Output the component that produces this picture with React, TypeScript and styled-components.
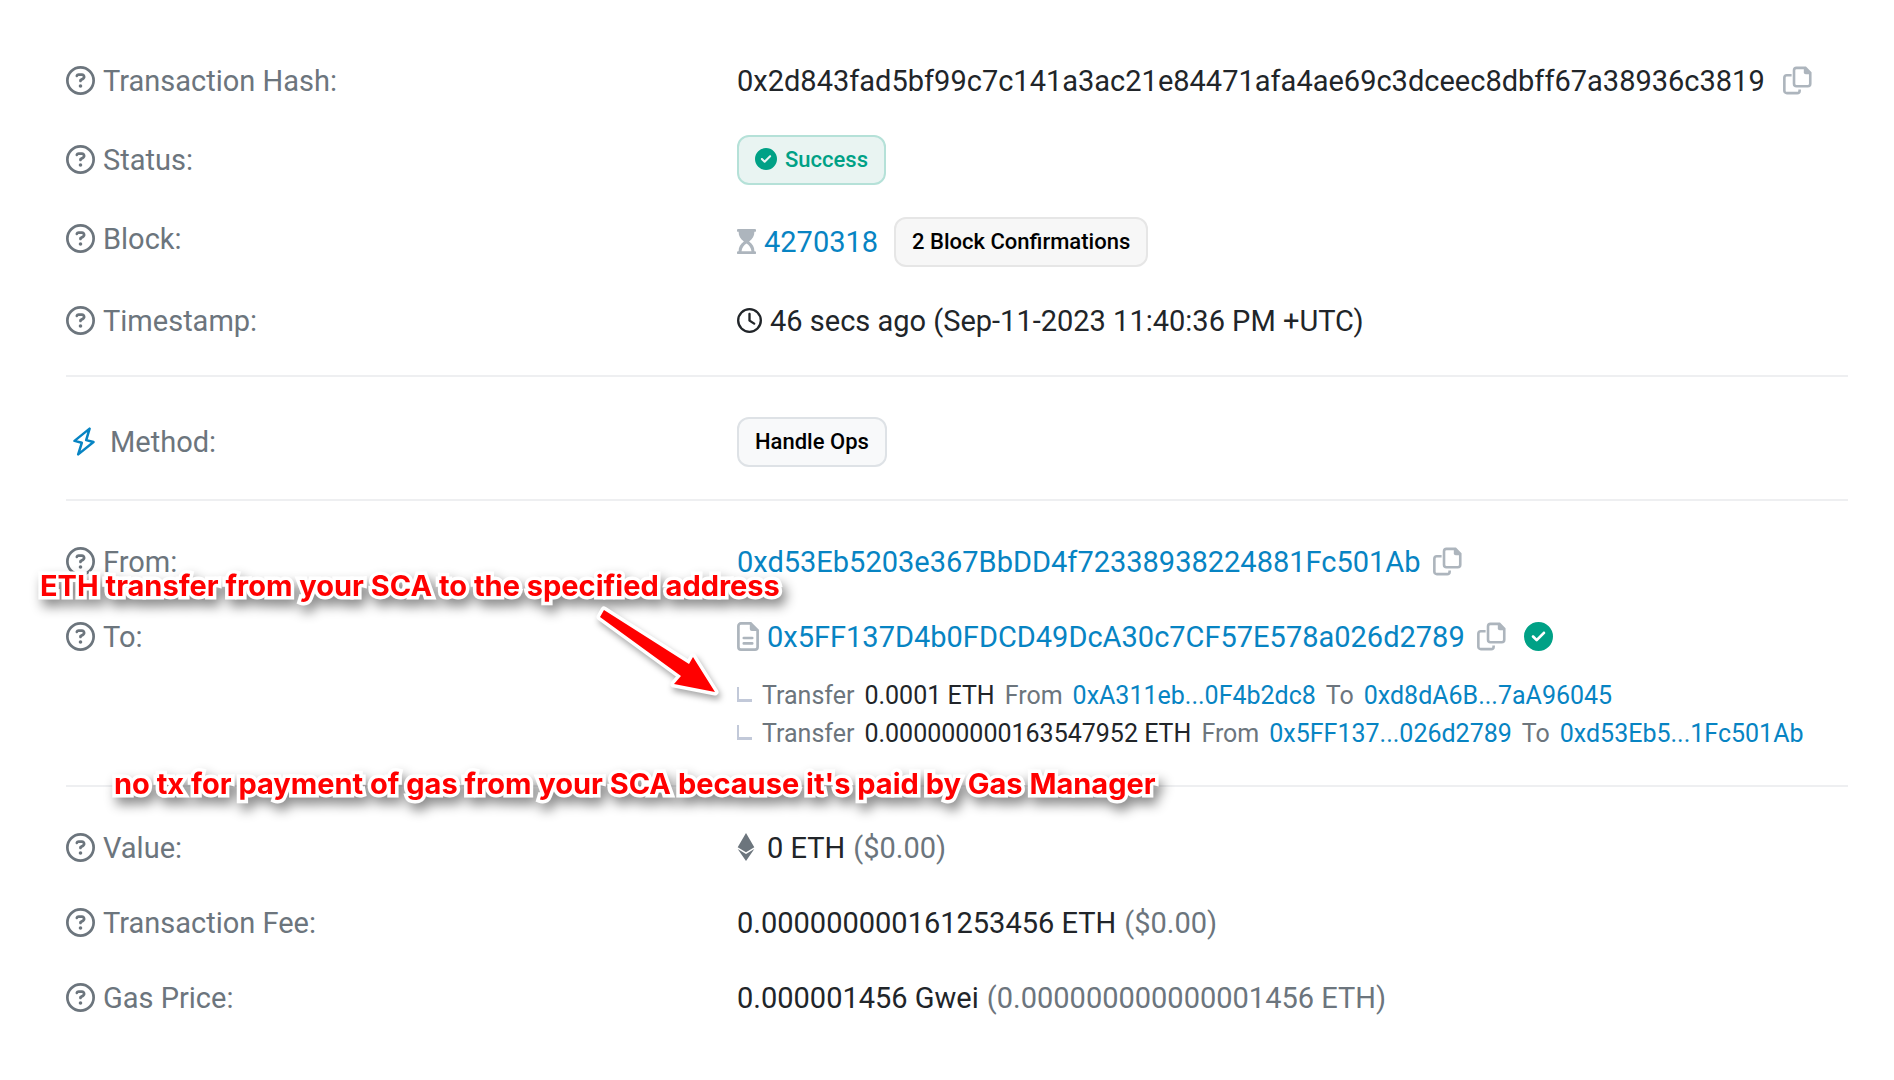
import React from 'react';
import styled, { createGlobalStyle, css } from 'styled-components';
import { FaCircleCheck, FaRegCircleQuestion, FaRegClock } from 'react-icons/fa6';

const GlobalStyle = createGlobalStyle`
  *, *::before, *::after { box-sizing: border-box; }
  body {
    margin: 0;
    background: #fff;
    color: #212529;
    font-family: Roboto, "Liberation Sans", sans-serif;
    font-size: 29px;
    line-height: 44px;
  }
`;

const Page = styled.main`
  position: relative;
  min-height: 100vh;
  padding: 59px 46px 40px 66px;
`;

const Group = styled.dl<{ $gap?: number; $top?: number }>`
  margin: 0;
  padding-bottom: 32px;
  display: flex;
  flex-direction: column;
  gap: ${p => p.$gap ?? 31}px;

  &:not(:first-child) {
    padding-top: ${p => p.$top ?? 39}px;
    border-top: 2px solid #eeeff1;
  }
`;

const Row = styled.div<{ $center?: boolean }>`
  display: grid;
  grid-template-columns: 671px minmax(0, 1fr);
  align-items: ${p => (p.$center ? 'center' : 'start')};
`;

const Label = styled.dt<{ $inset?: boolean }>`
  display: flex;
  align-items: center;
  gap: 8px;
  color: #6c757d;
  white-space: nowrap;
  ${p => p.$inset && css`
    padding-left: 7px;
    gap: 15px;
  `}
`;

const Value = styled.dd`
  margin: 0;
  white-space: nowrap;
`;

const Line = styled.div<{ $gap?: number }>`
  display: flex;
  align-items: center;
  gap: ${p => p.$gap ?? 8}px;
`;

const Icon = styled.span<{ $color?: string; $size?: number }>`
  display: inline-flex;
  flex: none;
  margin-bottom: 2px;
  color: ${p => p.$color ?? 'inherit'};
  font-size: ${p => p.$size ?? 29}px;

  svg { display: block; }
`;

const Link = styled.a`
  color: #0784c3;
  text-decoration: none;
`;

const Muted = styled.span`
  color: #6c757d;
`;

const Badge = styled.span<{ $tone?: 'success' | 'neutral' }>`
  display: inline-flex;
  align-items: center;
  gap: 8px;
  height: 50px;
  padding: 0 16px;
  border: 2px solid #dee2e6;
  border-radius: 12px;
  background: #f8f9fa;
  color: #000;
  font-size: 22px;
  font-weight: 500;
  ${p => p.$tone === 'neutral' && css`
    border-color: #e6e6e6;
    background: #f7f7f7;
  `}
  ${p => p.$tone === 'success' && css`
    border-color: #b5e1d8;
    background: #e9f4f2;
    color: #00a186;
  `}
`;

const CopyButton = styled.button`
  display: inline-flex;
  flex: none;
  margin: 0 0 2px;
  padding: 0;
  border: 0;
  background: none;
  color: #adb5bd;
  cursor: pointer;
`;

const Transfers = styled.ul`
  margin: 18px 0 0;
  padding: 0;
  list-style: none;
`;

const Transfer = styled.li`
  display: flex;
  align-items: center;
  gap: 10px;
  font-size: 25px;
  line-height: 38px;

  &::before {
    content: "";
    width: 15px;
    height: 15px;
    margin-bottom: 4px;
    border: solid #c2c9d9;
    border-width: 0 0 3px 2px;
  }
`;

const Note = styled.p<{ $x: number; $y: number }>`
  position: absolute;
  left: ${p => p.$x}px;
  top: ${p => p.$y}px;
  margin: 0;
  color: #f00;
  font-family: Inter, "Liberation Sans", sans-serif;
  font-size: 29px;
  font-weight: 700;
  line-height: 40px;
  white-space: nowrap;
  -webkit-text-stroke: 7px #fff;
  paint-order: stroke fill;
  filter: drop-shadow(4px 7px 6px rgba(0, 0, 0, 0.45));
`;

const Arrow = styled.svg`
  position: absolute;
  left: 590px;
  top: 600px;
  filter: drop-shadow(2px 4px 3px rgba(0, 0, 0, 0.35));
`;

const CopyIcon = () => (
  <svg width="29" height="29" viewBox="0 0 30 29" fill="none" stroke="currentColor" strokeWidth="2.7" aria-hidden="true">
    <path d="M14 1.4h9.2l5 5v11.4a2.6 2.6 0 0 1-2.6 2.6H14a2.6 2.6 0 0 1-2.6-2.6V4A2.6 2.6 0 0 1 14 1.4z" />
    <path d="M21.5 .8V6a2 2 0 0 0 2 2H29L23 .8z" fill="currentColor" stroke="none" />
    <path d="M8.9 9H4a2.6 2.6 0 0 0-2.6 2.6V25A2.6 2.6 0 0 0 4 27.6h10.6a2.6 2.6 0 0 0 2.6-2.6v-1.3" />
  </svg>
);

const DocIcon = () => (
  <svg width="22" height="29" viewBox="0 0 22 29" fill="none" stroke="currentColor" strokeWidth="2.7" aria-hidden="true">
    <path d="M4 1.4h9.6l7 7V25a2.6 2.6 0 0 1-2.6 2.6H4A2.6 2.6 0 0 1 1.4 25V4A2.6 2.6 0 0 1 4 1.4z" />
    <path d="M12.8.8V7a2 2 0 0 0 2 2H21.4L14 .6z" fill="currentColor" stroke="none" />
    <path d="M6.8 16h8.4M6.8 21.4h8.4" strokeLinecap="round" />
  </svg>
);

const HourglassIcon = () => (
  <svg width="19" height="25" viewBox="0 0 19 25" fill="currentColor" aria-hidden="true">
    <path
      fillRule="evenodd"
      d="M1.2 0h16.6a1.3 1.3 0 0 1 0 2.8h-.4c0 4.3-1.8 7.3-5.3 9.7 3.5 2.4 5.3 5.4 5.3 9.7h.4a1.3 1.3 0 0 1 0 2.8H1.2a1.3 1.3 0 0 1 0-2.8h.4c0-4.3 1.8-7.3 5.3-9.7C3.4 10.1 1.6 7.1 1.6 2.8h-.4A1.3 1.3 0 0 1 1.2 0zM9.5 14.6c-2.5 1.5-4.3 4-5 7.6h10c-.7-3.6-2.5-6.1-5-7.6z"
    />
  </svg>
);

const BoltIcon = () => (
  <svg width="22" height="29" viewBox="0 0 22 29" fill="none" stroke="currentColor" strokeWidth="2.5" strokeLinejoin="round" aria-hidden="true">
    <path d="M16.6 1.6 1.5 13.9l7.3 1.9-3.6 11.6L20.5 15l-7.3-1.9z" />
  </svg>
);

const EtherIcon = () => (
  <svg width="18" height="28" viewBox="0 0 320 512" fill="currentColor" aria-hidden="true">
    <path d="M311.9 260.8 160 353.6 8 260.8 160 0zM160 383.4 8 290.6 160 512l152-221.4z" />
  </svg>
);

const Copy = ({ what }: { what: string }) => (
  <CopyButton type="button" aria-label={`Copy ${what}`}>
    <CopyIcon />
  </CopyButton>
);

const HelpLabel = ({ children }: { children: React.ReactNode }) => (
  <Label>
    <Icon><FaRegCircleQuestion /></Icon>
    {children}
  </Label>
);

const transfers = [
  { amount: '0.0001 ETH', from: '0xA311eb...0F4b2dc8', to: '0xd8dA6B...7aA96045' },
  { amount: '0.000000000163547952 ETH', from: '0x5FF137...026d2789', to: '0xd53Eb5...1Fc501Ab' },
];

export default function App() {
  return (
    <>
      <GlobalStyle />
      <Page>
        <Group $gap={32}>
          <Row>
            <HelpLabel>Transaction Hash:</HelpLabel>
            <Value>
              <Line $gap={18}>
                0x2d843fad5bf99c7c141a3ac21e84471afa4ae69c3dceec8dbff67a38936c3819
                <Copy what="transaction hash" />
              </Line>
            </Value>
          </Row>
          <Row $center>
            <HelpLabel>Status:</HelpLabel>
            <Value>
              <Line>
                <Badge $tone="success">
                  <Icon $size={22}><FaCircleCheck /></Icon>
                  Success
                </Badge>
              </Line>
            </Value>
          </Row>
          <Row>
            <HelpLabel>Block:</HelpLabel>
            <Value>
              <Line $gap={16}>
                <Line>
                  <Icon $color="#adb5bd"><HourglassIcon /></Icon>
                  <Link href="#block">4270318</Link>
                </Line>
                <Badge $tone="neutral">2 Block Confirmations</Badge>
              </Line>
            </Value>
          </Row>
          <Row>
            <HelpLabel>Timestamp:</HelpLabel>
            <Value>
              <Line>
                <Icon $size={25}><FaRegClock /></Icon>
                46 secs ago (Sep-11-2023 11:40:36 PM +UTC)
              </Line>
            </Value>
          </Row>
        </Group>

        <Group $top={40}>
          <Row $center>
            <Label $inset>
              <Icon $color="#0784c3"><BoltIcon /></Icon>
              Method:
            </Label>
            <Value>
              <Line>
                <Badge>Handle Ops</Badge>
              </Line>
            </Value>
          </Row>
        </Group>

        <Group>
          <Row>
            <HelpLabel>From:</HelpLabel>
            <Value>
              <Line $gap={12}>
                <Link href="#from">0xd53Eb5203e367BbDD4f72338938224881Fc501Ab</Link>
                <Copy what="sender address" />
              </Line>
            </Value>
          </Row>
          <Row>
            <HelpLabel>To:</HelpLabel>
            <Value>
              <Line $gap={18}>
                <Line $gap={12}>
                  <Line>
                    <Icon $color="#adb5bd"><DocIcon /></Icon>
                    <Link href="#to">0x5FF137D4b0FDCD49DcA30c7CF57E578a026d2789</Link>
                  </Line>
                  <Copy what="recipient address" />
                </Line>
                <Icon $color="#00a186"><FaCircleCheck /></Icon>
              </Line>
              <Transfers>
                {transfers.map(t => (
                  <Transfer key={t.amount}>
                    <Muted>Transfer</Muted>
                    <span>{t.amount}</span>
                    <Muted>From</Muted>
                    <Link href="#transfer-from">{t.from}</Link>
                    <Muted>To</Muted>
                    <Link href="#transfer-to">{t.to}</Link>
                  </Transfer>
                ))}
              </Transfers>
            </Value>
          </Row>
        </Group>

        <Group>
          <Row>
            <HelpLabel>Value:</HelpLabel>
            <Value>
              <Line $gap={12}>
                <Icon $color="#6c757d"><EtherIcon /></Icon>
                <Line>0 ETH <Muted>($0.00)</Muted></Line>
              </Line>
            </Value>
          </Row>
          <Row>
            <HelpLabel>Transaction Fee:</HelpLabel>
            <Value>
              <Line>0.000000000161253456 ETH <Muted>($0.00)</Muted></Line>
            </Value>
          </Row>
          <Row>
            <HelpLabel>Gas Price:</HelpLabel>
            <Value>
              <Line>0.000001456 Gwei <Muted>(0.000000000000001456 ETH)</Muted></Line>
            </Value>
          </Row>
        </Group>

        <Note $x={40} $y={566}>ETH transfer from your SCA to the specified address</Note>
        <Note $x={114} $y={764}>no tx for payment of gas from your SCA because it's paid by Gas Manager</Note>
        <Arrow width="140" height="110" viewBox="590 600 140 110" aria-hidden="true">
          <path
            d="M604 610 689 664 693 657 715 692 674 684 681 676 600 617z"
            fill="#f00"
            stroke="#fff"
            strokeWidth="7"
            strokeLinejoin="round"
            paintOrder="stroke"
          />
        </Arrow>
      </Page>
    </>
  );
}
